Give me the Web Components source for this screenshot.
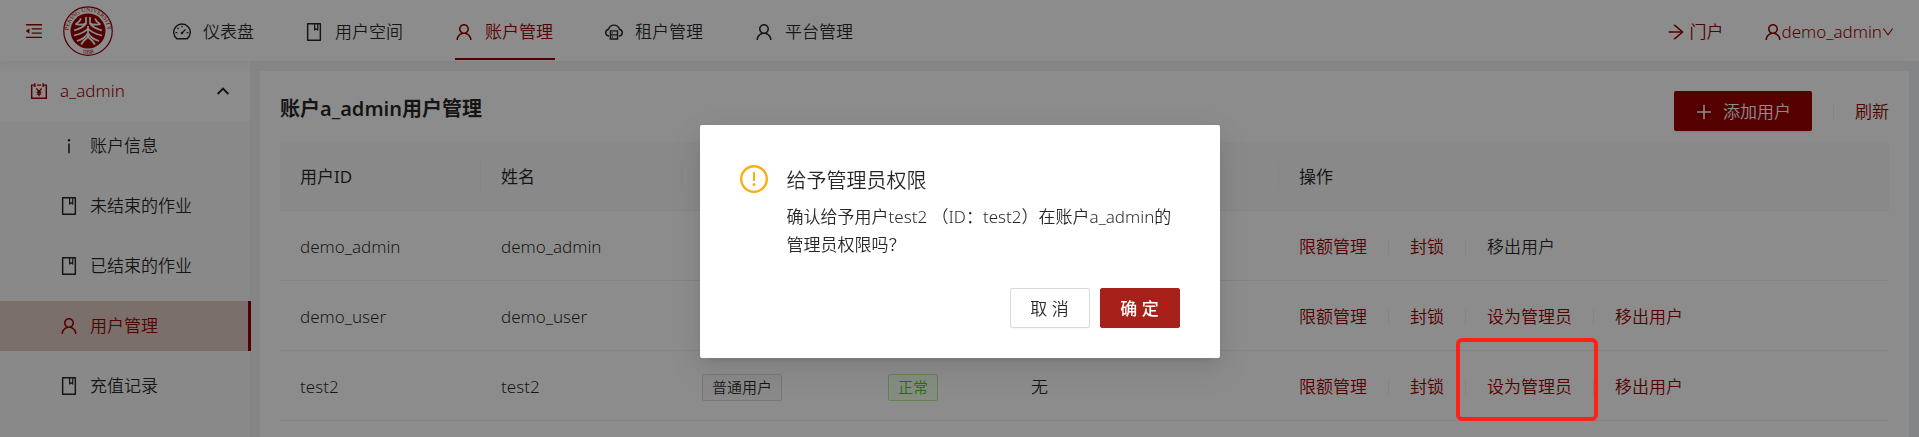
<!DOCTYPE html>
<html lang="zh-CN">
<head>
<meta charset="utf-8">
<title>账户管理</title>
<style>
  html, body { margin: 0; }
  body {
    --primary: #9b0000;
    --text: rgba(0, 0, 0, .85);
    --line: #f0f0f0;
    min-height: 100vh;
    display: flex;
    flex-direction: column;
    background: #f0f2f5;
    color: var(--text);
    font: 350 17px/28px "Noto Sans", "Noto Sans CJK SC", sans-serif;
  }
  .layout { flex: 1; display: flex; }
</style>
</head>
<body>
<app-header>
  <nav-item icon="dashboard">仪表盘</nav-item>
  <nav-item icon="book">用户空间</nav-item>
  <nav-item icon="user" active>账户管理</nav-item>
  <nav-item icon="cloud">租户管理</nav-item>
  <nav-item icon="user">平台管理</nav-item>
</app-header>
<div class="layout">
  <app-sidebar heading="a_admin">
    <side-item icon="info">账户信息</side-item>
    <side-item icon="book">未结束的作业</side-item>
    <side-item icon="book">已结束的作业</side-item>
    <side-item icon="user" active>用户管理</side-item>
    <side-item icon="book">充值记录</side-item>
  </app-sidebar>
  <user-panel>账户a_admin用户管理</user-panel>
</div>
<confirm-dialog heading="给予管理员权限">确认给予用户test2 （ID：test2）在账户a_admin的管理员权限吗？</confirm-dialog>

<script>
const ICONS = {
  user: '<path d="M858.5 763.6a374 374 0 00-80.6-119.5 375.63 375.63 0 00-119.5-80.6c-.4-.2-.8-.3-1.2-.5C719.5 518 760 444.7 760 362c0-137-111-248-248-248S264 225 264 362c0 82.700 40.500 156 102.800 201.100-.4.200-.8.300-1.200.500-44.800 18.900-85 46-119.500 80.600a375.630 375.630 0 00-80.600 119.500A371.700 371.700 0 00136 901.800a8 8 0 008 8.200h60c4.400 0 7.900-3.500 8-7.800 2-77.200 33-149.500 87.800-204.300 56.700-56.700 132-87.900 212.200-87.900s155.500 31.200 212.200 87.900C779 752.700 810 825 812 902.200c.1 4.400 3.600 7.800 8 7.800h60a8 8 0 008-8.200c-1-47.800-10.900-94.300-29.500-138.200zM512 534c-45.900 0-89.100-17.900-121.600-50.400S340 407.900 340 362c0-45.900 17.900-89.100 50.400-121.600S466.100 190 512 190s89.100 17.900 121.600 50.400S684 316.100 684 362c0 45.900-17.900 89.100-50.400 121.600S557.900 534 512 534z"/>',
  book: '<path d="M832 64H192c-17.700 0-32 14.300-32 32v832c0 17.700 14.300 32 32 32h640c17.700 0 32-14.300 32-32V96c0-17.700-14.300-32-32-32zm-260 72h96v209.900L621.500 312 572 347.400V136zm220 752H232V136h280v296.900c0 3.300 1 6.600 3 9.300a15.900 15.900 0 0022.300 3.700l83.800-59.900 81.400 59.400c2.700 2 6 3.100 9.400 3.100 8.800 0 16-7.200 16-16V136h64v752z"/>',
  arrow: '<path d="M869 487.800L491.200 159.900c-2.900-2.500-6.600-3.900-10.500-3.900h-88.500c-7.400 0-10.800 9.200-5.200 14l350.200 304H152c-4.400 0-8 3.600-8 8v60c0 4.400 3.600 8 8 8h585.100L386.900 854c-5.600 4.900-2.200 14 5.200 14h91.500c1.900 0 3.800-.7 5.200-2L869 536.200a32.070 32.070 0 000-48.400z"/>',
  down: '<path d="M884 256h-75c-5.100 0-9.900 2.500-12.900 6.600L512 654.200 227.900 262.600c-3-4.100-7.800-6.600-12.900-6.600h-75c-6.500 0-10.300 7.400-6.500 12.700l352.600 486.100c12.800 17.600 39 17.600 51.700 0l352.600-486.100c3.900-5.300.1-12.700-6.400-12.700z"/>',
  up: '<path d="M170 700L512 360 854 700" fill="none" stroke="currentColor" stroke-width="130"/>',
  fold: '<path d="M408 442h480c4.400 0 8-3.600 8-8v-56c0-4.400-3.600-8-8-8H408c-4.400 0-8 3.600-8 8v56c0 4.400 3.600 8 8 8zm-8 204c0 4.400 3.600 8 8 8h480c4.400 0 8-3.600 8-8v-56c0-4.400-3.600-8-8-8H408c-4.400 0-8 3.600-8 8v56zm504-486H120c-4.400 0-8 3.600-8 8v56c0 4.400 3.600 8 8 8h784c4.400 0 8-3.600 8-8v-56c0-4.400-3.600-8-8-8zm0 632H120c-4.400 0-8 3.600-8 8v56c0 4.400 3.600 8 8 8h784c4.400 0 8-3.600 8-8v-56c0-4.400-3.600-8-8-8zM115.400 518.900L271.700 642c5.800 4.600 14.400.5 14.400-6.900V388.900c0-7.400-8.500-11.500-14.400-6.900L115.400 505.100a8.740 8.740 0 000 13.800z"/>',
  info: '<path d="M448 224a64 64 0 10128 0 64 64 0 10-128 0zm96 168h-64c-4.400 0-8 3.600-8 8v464c0 4.400 3.600 8 8 8h64c4.400 0 8-3.600 8-8V400c0-4.400-3.600-8-8-8z"/>',
  plus: '<path d="M474 152h76v322h308v76H550v322h-76V550H166v-76h308z"/>',
  warn: '<path d="M512 64C264.600 64 64 264.600 64 512s200.600 448 448 448 448-200.600 448-448S759.400 64 512 64zm0 820c-205.400 0-372-166.600-372-372s166.600-372 372-372 372 166.600 372 372-166.600 372-372 372z"/><path d="M464 688a48 48 0 1096 0 48 48 0 10-96 0zm24-112h48c4.400 0 8-3.600 8-8V296c0-4.400-3.600-8-8-8h-48c-4.400 0-8 3.600-8 8v272c0 4.400 3.600 8 8 8z"/>',
  dashboard: '<g fill="none" stroke="currentColor" stroke-width="72"><path d="M262 852A412 412 0 1 1 762 852Z" stroke-linejoin="round"/><path d="M512 560L690 382" stroke-width="64"/><path d="M512 195v90M190 540h90M744 540h90M285 312l60 60" stroke-width="56"/></g><circle cx="512" cy="560" r="62"/>',
  account: '<g fill="none" stroke="currentColor" stroke-width="72"><path d="M270 220H148V876H876V220H754M410 220H614"/><path d="M306 120V310M718 120V310"/><path d="M385 385L512 550 639 385M512 545V770M400 575H624M400 670H624" stroke-width="64"/></g>',
  cloud: '<g fill="none" stroke="currentColor" stroke-width="72"><path d="M262 720C150 690 100 620 100 545C100 460 155 395 240 372C285 245 385 170 512 170S739 245 784 372C869 395 924 460 924 545C924 620 874 690 762 720"/><path d="M336 456H688V856H336ZM336 656H688"/></g><circle cx="430" cy="556" r="34"/><circle cx="430" cy="756" r="34"/>'
};

/* Registers an element; setup fills the cloned template before it goes live. */
function define(name, template, setup) {
  const tpl = document.createElement('template');
  tpl.innerHTML = template;
  customElements.define(name, class extends HTMLElement {
    connectedCallback() {
      if (this.shadowRoot) return;
      const content = tpl.content.cloneNode(true);
      if (setup) setup(this, content);
      this.attachShadow({ mode: 'open' }).append(content);
    }
  });
}

define('ui-icon', `
  <style>
    :host { display: inline-flex; flex: none; width: var(--size, 18px); height: var(--size, 18px); }
    svg { width: 100%; height: 100%; fill: currentColor; }
  </style>
  <svg viewBox="64 64 896 896" aria-hidden="true"></svg>`,
  (el, root) => { root.querySelector('svg').innerHTML = ICONS[el.getAttribute('name')]; });

define('school-logo', `
  <style>
    :host { display: block; flex: none; width: 50px; height: 50px; color: var(--primary); }
    svg { display: block; width: 100%; height: 100%; }
    text { font: 400 12px "Liberation Serif", serif; fill: currentColor; }
  </style>
  <svg viewBox="0 0 100 100" aria-hidden="true">
    <defs>
      <path id="top" d="M17 71A39 39 0 1 1 83 71"/>
      <path id="base" d="M26 89A46 46 0 0 0 74 89"/>
    </defs>
    <circle cx="50" cy="50" r="48.500" fill="#fff" stroke="currentColor" stroke-width="2.500"/>
    <circle cx="50" cy="50" r="35" fill="currentColor"/>
    <text><textPath href="#top" startOffset="50%" text-anchor="middle">PEKING UNIVERSITY</textPath></text>
    <text><textPath href="#base" startOffset="50%" text-anchor="middle">1898</textPath></text>
    <g fill="none" stroke="#fff" stroke-width="3.500">
      <path d="M46 22V35Q41 38 25 37M36 25Q34 31 25 37M46 35Q42 43 22 49"/>
      <path d="M54 22V35Q59 38 75 37M64 25Q66 31 75 37M54 35Q58 43 78 49"/>
      <path d="M50 40V62M50 45Q42 55 22 59M50 45Q58 55 78 59"/>
      <path d="M50 54Q44 65 28 70M50 54Q56 65 72 70M50 62Q42 68 36 77M50 62Q58 68 64 77"/>
    </g>
  </svg>`);

define('nav-item', `
  <style>
    :host { display: flex; }
    a { box-sizing: border-box; display: flex; align-items: center; gap: 12px; min-width: 100px; padding-top: 5px; border-bottom: 2px solid transparent; color: inherit; text-decoration: none; }
    :host([active]) a { color: var(--primary); border-color: var(--primary); }
    :host(:first-child) a { min-width: 82px; }
  </style>
  <a href="#"><ui-icon></ui-icon><slot></slot></a>`,
  (el, root) => root.querySelector('ui-icon').setAttribute('name', el.getAttribute('icon')));

define('app-header', `
  <style>
    :host { display: block; position: relative; background: #fff; box-shadow: 0 2px 10px #f0f1f2; }
    header { display: flex; height: 61px; align-items: center; padding: 0 25px; color: var(--primary); }
    button { display: flex; padding: 0; border: 0; background: none; color: inherit; }
    school-logo { margin-left: 20px; }
    nav { display: flex; align-self: stretch; gap: 50px; margin-left: 60px; padding-bottom: 1px; color: var(--text); }
    .right { display: flex; gap: 40px; margin-left: auto; }
    .right a { display: flex; align-items: center; padding-top: 2px; color: inherit; text-decoration: none; }
    .portal { gap: 5px; }
    .down { --size: 12px; }
  </style>
  <header>
    <button aria-label="收起菜单"><ui-icon name="fold"></ui-icon></button>
    <school-logo></school-logo>
    <nav><slot></slot></nav>
    <div class="right">
      <a class="portal" href="#"><ui-icon name="arrow"></ui-icon>门户</a>
      <a href="#"><ui-icon name="user"></ui-icon>demo_admin<ui-icon class="down" name="down"></ui-icon></a>
    </div>
  </header>`);

define('side-item', `
  <style>
    :host { display: block; margin-bottom: 10px; }
    a { display: flex; align-items: center; gap: 12px; height: 50px; padding-left: 60px; color: inherit; text-decoration: none; }
    :host([active]) { margin-right: -1px; position: relative; }
    :host([active]) a { color: var(--primary); background: #e0cac4; border-right: 3px solid var(--primary); }
  </style>
  <a href="#"><ui-icon></ui-icon><slot></slot></a>`,
  (el, root) => root.querySelector('ui-icon').setAttribute('name', el.getAttribute('icon')));

define('app-sidebar', `
  <style>
    :host { display: block; flex: none; width: 250px; background: #fafafa; }
    .title { background: #fff; padding: 5px 0; }
    button { display: flex; align-items: center; gap: 12px; width: 100%; height: 50px; padding: 0 20px 0 30px; border: 0; background: none; font: inherit; color: var(--primary); }
    .up { --size: 14px; margin-left: auto; color: var(--text); }
  </style>
  <div class="title"><button aria-expanded="true"><ui-icon name="account"></ui-icon><span></span><ui-icon class="up" name="up"></ui-icon></button></div>
  <nav><slot></slot></nav>`,
  (el, root) => { root.querySelector('span').textContent = el.getAttribute('heading'); });

define('state-tag', `
  <style>
    :host { display: inline-block; vertical-align: middle; padding: 0 9px; border: 1px solid #d9d9d9; border-radius: 2px; background: #fafafa; font-size: 15px; line-height: 25px; }
    :host([kind=success]) { color: #52c41a; background: #f6ffed; border-color: #b7eb8f; }
  </style>
  <slot></slot>`);

define('row-actions', `
  <style>
    :host { display: flex; align-items: center; gap: 21px; }
    .bar { width: 1px; height: 16px; background: var(--line); }
    a { position: relative; color: var(--primary); text-decoration: none; }
    a.off { color: var(--text); }
    /* highlight frame drawn above the page mask */
    a.mark::after { content: ""; position: absolute; z-index: 20; inset: -35px -26px -20px -31px; border: 4px solid #ff2116; border-radius: 6px; }
  </style>`,
  (el, root) => {
    el.getAttribute('items').split(' ').forEach((label, i) => {
      if (i) root.append(Object.assign(document.createElement('span'), { className: 'bar' }));
      const link = Object.assign(document.createElement('a'), { textContent: label.replace(/[*!]/, '') });
      link.href = '#';
      if (label.endsWith('!')) link.className = 'off';
      if (label.endsWith('*')) link.className = 'mark';
      root.append(link);
    });
  });

define('user-panel', `
  <style>
    :host { display: block; flex: 1; margin: 10px 10px 0; padding: 20px; background: #fff; }
    .head { display: flex; align-items: center; gap: 21px; margin-bottom: 11px; }
    h1 { margin: 0 auto 4px 0; font-size: 20px; line-height: 28px; font-weight: 600; }
    .add { display: flex; align-items: center; justify-content: center; gap: 10px; min-width: 138px; height: 40px; padding: 2px 0 0; border: 0; border-radius: 2px; background: var(--primary); color: #fff; font: inherit; box-shadow: 0 2px 0 rgba(0, 0, 0, .04); }
    .bar { width: 1px; height: 16px; background: var(--line); }
    .head a { padding-top: 2px; color: var(--primary); text-decoration: none; }
    table { width: 100%; table-layout: fixed; border-collapse: separate; border-spacing: 0; }
    th, td { box-sizing: border-box; height: 70px; padding: 2px 20px 0; text-align: left; font-weight: inherit; border-bottom: 1px solid var(--line); }
    th { height: 69px; background: #fafafa linear-gradient(var(--line), var(--line)) right center / 1px 28px no-repeat; font-weight: 400; }
    th:last-child { background: #fafafa; }
    .w1 { width: 201px; } .w2 { width: 186px; } .w3 { width: 143px; } .w4 { width: 268px; }
  </style>
  <div class="head">
    <h1><slot></slot></h1>
    <button class="add"><ui-icon name="plus"></ui-icon>添加用户</button>
    <span class="bar"></span>
    <a href="#">刷新</a>
  </div>
  <table>
    <colgroup><col class="w1"><col class="w1"><col class="w2"><col class="w3"><col class="w4"><col></colgroup>
    <thead><tr><th>用户ID</th><th>姓名</th><th></th><th></th><th></th><th>操作</th></tr></thead>
    <tbody>
      <tr><td>demo_admin</td><td>demo_admin</td><td></td><td></td><td></td><td><row-actions items="限额管理 封锁 移出用户!"></row-actions></td></tr>
      <tr><td>demo_user</td><td>demo_user</td><td></td><td></td><td></td><td><row-actions items="限额管理 封锁 设为管理员 移出用户"></row-actions></td></tr>
      <tr><td>test2</td><td>test2</td><td><state-tag>普通用户</state-tag></td><td><state-tag kind="success">正常</state-tag></td><td>无</td><td><row-actions items="限额管理 封锁 设为管理员* 移出用户"></row-actions></td></tr>
    </tbody>
  </table>`);

define('confirm-dialog', `
  <style>
    :host { position: fixed; inset: 0; z-index: 10; display: flex; justify-content: center; align-items: flex-start; padding-top: 125px; background: rgba(0, 0, 0, .45); }
    section { box-sizing: border-box; width: 520px; padding: 40px 40px 30px; border-radius: 2px; background: #fff; box-shadow: 0 4px 8px -5px rgba(0, 0, 0, .12), 0 8px 20px rgba(0, 0, 0, .08), 0 11px 35px 10px rgba(0, 0, 0, .05); }
    .body { display: grid; grid-template-columns: 28px 1fr; column-gap: 19px; }
    ui-icon { --size: 28px; color: #faad14; }
    h2 { margin: 0; padding: 2px 0 8px; font-size: 20px; line-height: 28px; font-weight: inherit; }
    p { margin: 0; grid-column: 2; }
    .foot { display: flex; justify-content: flex-end; gap: 10px; margin-top: 29px; }
    button { width: 80px; height: 40px; padding: 1px 0 0; border: 1px solid #d9d9d9; border-radius: 2px; background: #fff; color: inherit; font: inherit; box-shadow: 0 2px 0 rgba(0, 0, 0, .02); }
    .ok { background: #a8201a; border-color: #a8201a; color: #fff; font-weight: 500; }
  </style>
  <section role="dialog" aria-modal="true" aria-labelledby="title">
    <div class="body"><ui-icon name="warn"></ui-icon><h2 id="title"></h2><p><slot></slot></p></div>
    <div class="foot"><button>取 消</button><button class="ok">确 定</button></div>
  </section>`,
  (el, root) => { root.querySelector('h2').textContent = el.getAttribute('heading'); });
</script>
</body>
</html>
